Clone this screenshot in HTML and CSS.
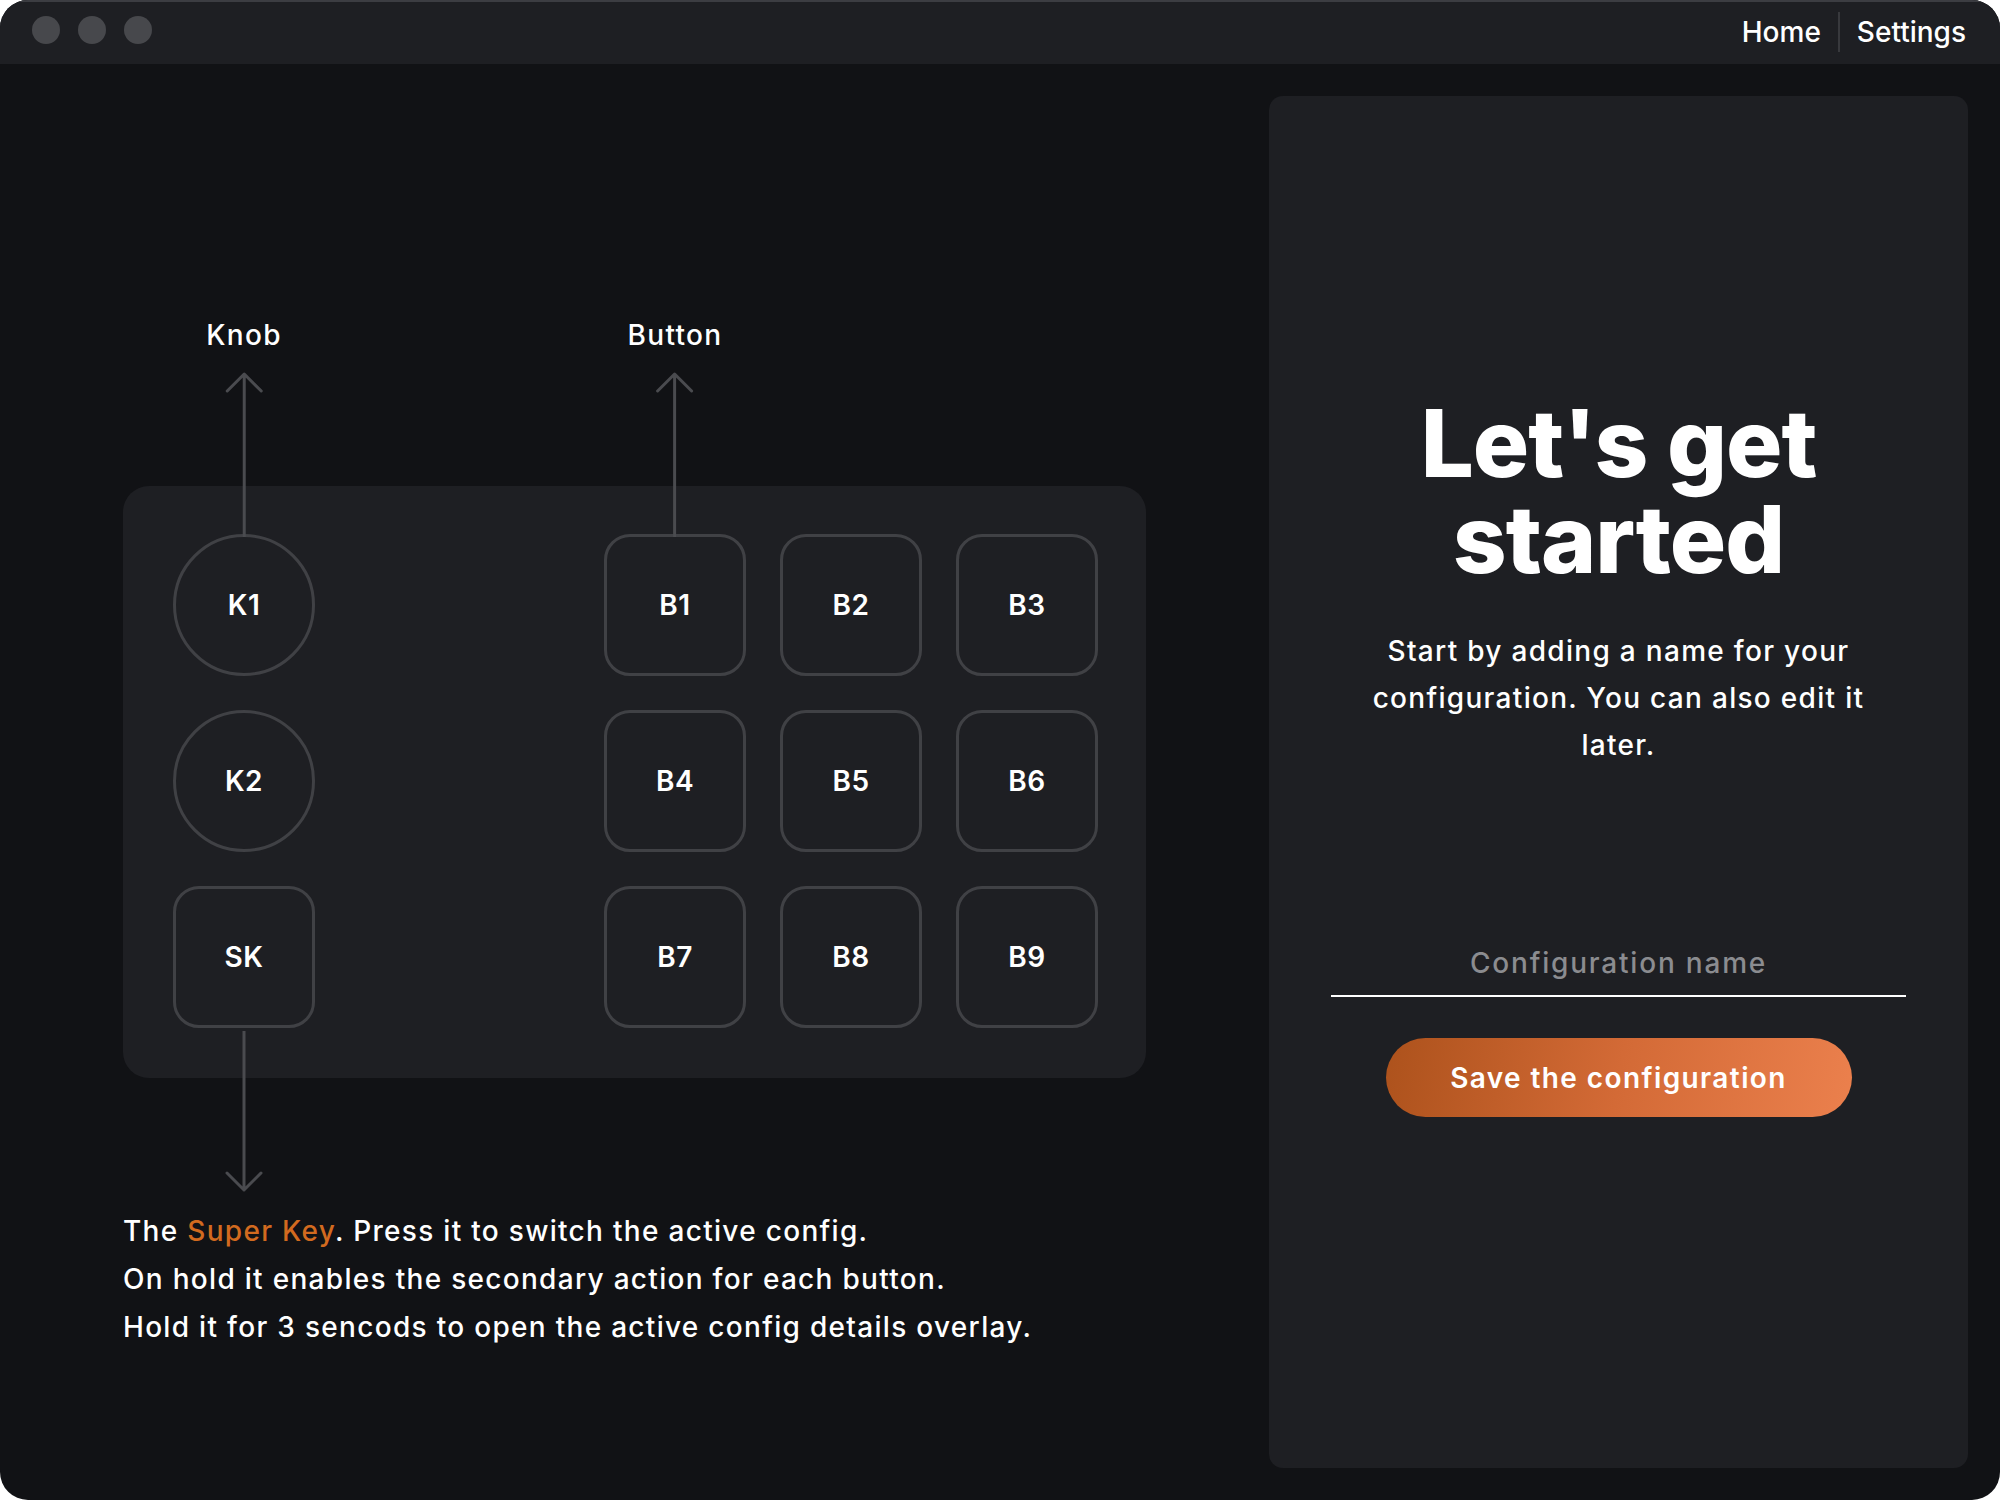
FILE: index.html
```html
<!DOCTYPE html>
<html lang="en">
<head>
    <meta charset="UTF-8">
    <meta name="viewport" content="width=device-width, initial-scale=1.0">
    <title>Configurator</title>
    <link rel="stylesheet" href="styles.css">
</head>
<body>
    <div class="window">
        <header class="titlebar">
            <div class="lights">
                <span class="light"></span>
                <span class="light"></span>
                <span class="light"></span>
            </div>
            <nav class="nav">
                <a class="nav-link" href="#">Home</a>
                <a class="nav-link" href="#">Settings</a>
            </nav>
        </header>

        <main class="main">
            <section class="stage">
                <div class="diagram">
                    <div class="device">
                        <div class="knobs">
                            <div class="key knob">K1
                                <div class="callout up">
                                    <span class="callout-label">Knob</span>
                                    <svg class="arrow" width="40" height="166" viewBox="0 0 40 166">
                                        <path d="M20 3 V166 M3 20 L20 3 L37 20" />
                                    </svg>
                                </div>
                            </div>
                            <div class="key knob">K2</div>
                            <div class="key">SK
                                <div class="callout down">
                                    <svg class="arrow" width="40" height="162" viewBox="0 0 40 162">
                                        <path d="M20 0 V159 M3 142 L20 159 L37 142" />
                                    </svg>
                                </div>
                            </div>
                        </div>
                        <div class="buttons">
                            <div class="key">B1
                                <div class="callout up">
                                    <span class="callout-label">Button</span>
                                    <svg class="arrow" width="40" height="166" viewBox="0 0 40 166">
                                        <path d="M20 3 V166 M3 20 L20 3 L37 20" />
                                    </svg>
                                </div>
                            </div>
                            <div class="key">B2</div>
                            <div class="key">B3</div>
                            <div class="key">B4</div>
                            <div class="key">B5</div>
                            <div class="key">B6</div>
                            <div class="key">B7</div>
                            <div class="key">B8</div>
                            <div class="key">B9</div>
                        </div>
                    </div>

                    <p class="description">
                        The <span class="accent">Super Key</span>. Press it to switch the active config.<br>
                        On hold it enables the secondary action for each button.<br>
                        Hold it for 3 sencods to open the active config details overlay.
                    </p>
                </div>
            </section>

            <aside class="panel">
                <h1 class="title">Let's get started</h1>
                <p class="lead">Start by adding a name for your configuration. You can also edit it later.</p>
                <input class="name-input" type="text" placeholder="Configuration name">
                <button class="save-button">Save the configuration</button>
            </aside>
        </main>
    </div>
</body>
</html>
```

FILE: styles.css
```css
* {
    box-sizing: border-box;
}

body {
    margin: 0;
    background-color: #ffffff;
    font-family: Inter, "Noto Sans", sans-serif;
    letter-spacing: 1.3px;
    color: #ffffff;
}

.window {
    width: 2000px;
    height: 1500px;
    border-radius: 28px;
    overflow: hidden;
    background-color: #111215;
    display: flex;
    flex-direction: column;
}

/* title bar */

.titlebar {
    height: 64px;
    flex-shrink: 0;
    display: flex;
    align-items: center;
    justify-content: space-between;
    padding: 0 17px 0 32px;
    background-color: #1e1f23;
    box-shadow: inset 0 2px 0 #3c3d42;
}

.lights {
    display: flex;
    gap: 18px;
    margin-bottom: 4px;
}

.light {
    width: 28px;
    height: 28px;
    border-radius: 50%;
    background-color: #47484c;
}

.nav {
    display: flex;
    align-items: center;
}

.nav-link {
    color: #ffffff;
    text-decoration: none;
    font-size: 28px;
    font-weight: 500;
    line-height: 40px;
    letter-spacing: 0;
    padding: 0 17px;
}

.nav-link + .nav-link {
    border-left: 2px solid #38393d;
}

/* main area */

.main {
    flex: 1;
    display: flex;
    gap: 32px;
    padding: 32px;
}

.stage {
    flex: 1;
    display: flex;
    justify-content: center;
    padding-top: 390px;
}

.diagram {
    width: 1023px;
}

.device {
    display: flex;
    justify-content: space-between;
    padding: 48px 48px 50px 50px;
    background-color: #1e1f23;
    border-radius: 26px;
}

.knobs {
    display: flex;
    flex-direction: column;
    gap: 34px;
}

.buttons {
    display: grid;
    grid-template-columns: repeat(3, 142px);
    gap: 34px;
}

.key {
    position: relative;
    width: 142px;
    height: 142px;
    display: flex;
    align-items: center;
    justify-content: center;
    border: 3px solid #404145;
    border-radius: 26px;
    font-size: 28px;
    font-weight: 600;
    letter-spacing: 0.5px;
}

.knob {
    border-radius: 50%;
}

.callout {
    position: absolute;
    left: 50%;
    transform: translateX(-50%);
    display: flex;
    flex-direction: column;
    align-items: center;
}

.callout.up {
    bottom: 100%;
}

.callout.down {
    top: calc(100% + 6px);
}

.callout-label {
    font-size: 28px;
    font-weight: 500;
    line-height: 34px;
    letter-spacing: 1.3px;
    margin-bottom: 19px;
    white-space: nowrap;
}

.arrow {
    display: block;
    fill: none;
    stroke: #4a4b4f;
    stroke-width: 3;
    stroke-linecap: round;
    stroke-linejoin: round;
}

.description {
    margin: 129px 0 0;
    font-size: 28px;
    font-weight: 500;
    line-height: 48px;
}

.accent {
    color: #d26a1f;
}

/* right panel */

.panel {
    width: 699px;
    flex-shrink: 0;
    display: flex;
    flex-direction: column;
    align-items: center;
    padding: 299px 62px 0;
    background-color: #1e1f23;
    border-radius: 14px;
}

.title {
    margin: 0;
    font-size: 94px;
    font-weight: 800;
    line-height: 96px;
    letter-spacing: -1px;
    text-align: center;
    width: 420px;
}

.lead {
    margin: 41px 0 0;
    max-width: 525px;
    font-size: 28px;
    font-weight: 500;
    line-height: 47px;
    text-align: center;
}

.name-input {
    width: 100%;
    margin-top: 174px;
    padding: 0 0 12px;
    background: transparent;
    border: none;
    border-bottom: 2px solid #ffffff;
    color: #ffffff;
    font-family: Inter, "Noto Sans", sans-serif;
    font-size: 28px;
    font-weight: 500;
    line-height: 40px;
    letter-spacing: 1.8px;
    text-align: center;
}

.name-input::placeholder {
    color: #8b8c90;
}

.name-input:focus {
    outline: none;
}

.save-button {
    width: 466px;
    height: 79px;
    margin-top: 41px;
    border: none;
    border-radius: 40px;
    background: linear-gradient(100deg, #ad521c 0%, #d36a36 50%, #eb804d 100%);
    color: #ffffff;
    font-family: Inter, "Noto Sans", sans-serif;
    font-size: 28px;
    font-weight: 600;
    letter-spacing: 1.4px;
    cursor: pointer;
}
```
